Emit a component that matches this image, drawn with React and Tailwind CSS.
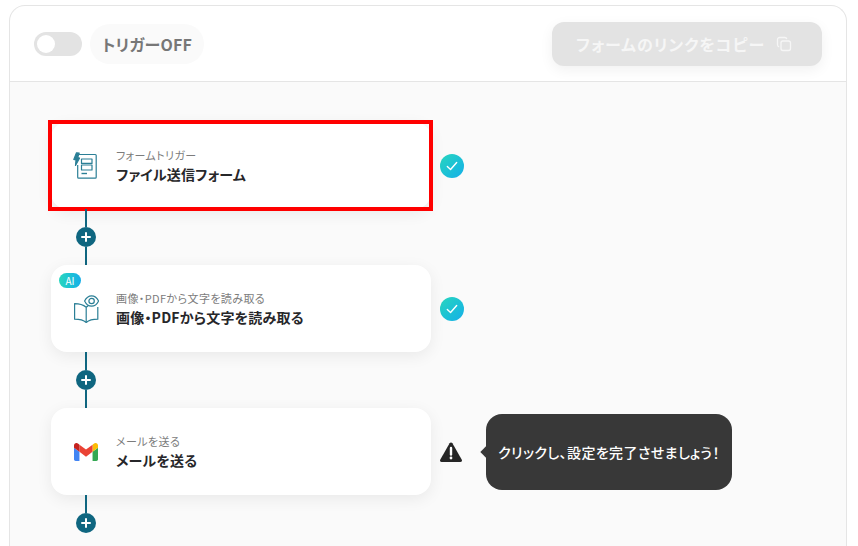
import React from 'react';

const Check = () => (
  <div className="ml-[9px] flex h-6 w-6 items-center justify-center rounded-full bg-gradient-to-br from-[#2ad6bd] to-[#18aee8]">
    <svg viewBox="0 0 24 24" className="h-[14px] w-[14px]" fill="none" stroke="#fff" strokeWidth="2.4" strokeLinecap="round" strokeLinejoin="round">
      <path d="M4 13l5.5 5L20 6" />
    </svg>
  </div>
);

const Connector = ({ last }) => (
  <div className="relative flex w-[70px] flex-col items-center">
    <div className="h-[18px] w-[2px] bg-[#0f6680]" />
    <div className="flex h-5 w-5 items-center justify-center rounded-full bg-[#0f6680]">
      <svg viewBox="0 0 12 12" className="h-3 w-3" fill="none" stroke="#fff" strokeWidth="2" strokeLinecap="round">
        <path d="M6 2v8M2 6h8" />
      </svg>
    </div>
    {!last && <div className="h-[18px] w-[2px] bg-[#0f6680]" />}
  </div>
);

const FormIcon = () => (
  <svg viewBox="0 0 24 27" className="mr-[2px] h-[27px] w-6" fill="none" stroke="#2b7f96" strokeWidth="1.2" strokeLinejoin="round">
    <path d="M5.5 2.500h16.800a.9.9 0 0 1 .9.9v21.900a.9.9 0 0 1-.9.9H5.600a.9.9 0 0 1-.9-.9V13" />
    <path d="M3.500.8L.8 7.400l2.200.5-.5 5.600 4-7.400-1.800-.6L6.200 1z" fill="#2b7f96" />
    <rect x="8.500" y="7" width="10.500" height="4.400" />
    <rect x="8.500" y="13" width="10.500" height="5" />
    <path d="M8.500 21.500h5.500" strokeWidth="1.4" />
  </svg>
);

const BookIcon = () => (
  <svg viewBox="0 0 25 28" className="h-7 w-[25px]" fill="none" stroke="#2b7f96" strokeWidth="1.2" strokeLinejoin="round">
    <path d="M12.200 12.200C9.500 10 4.600 8.600.6 8.600v15.600c4 0 8.900 1 11.600 3.300V12.200z" />
    <path d="M12.200 27.500c2.700-2.300 7.600-3.300 11.600-3.300V12M12.200 12.200c.6-.5 1.300-1 2-1.300" />
    <path d="M11 6c1.600-3.300 4.200-5.200 7-5.200S23.400 2.700 25 6c-1.600 3.300-4.200 5.200-7 5.200S12.600 9.300 11 6z" fill="#fff" transform="translate(-.4 0)" />
    <circle cx="17.600" cy="6" r="2.700" />
  </svg>
);

const GmailIcon = () => (
  <svg viewBox="52 42 88 66" className="h-[18px] w-6">
    <path fill="#4285f4" d="M58 108h14V74L52 59v43c0 3.32 2.69 6 6 6" />
    <path fill="#34a853" d="M120 108h14c3.32 0 6-2.69 6-6V59l-20 15" />
    <path fill="#fbbc04" d="M120 48v26l20-15v-8c0-7.42-8.47-11.65-14.4-7.2" />
    <path fill="#ea4335" d="M72 74V48l24 18 24-18v26L96 92" />
    <path fill="#c5221f" d="M52 51v8l20 15V48l-5.6-4.2c-5.94-4.45-14.4-.22-14.4 7.2" />
  </svg>
);

const Card = ({ icon, sub, title, children }) => (
  <div className="relative flex h-[87px] w-[380px] items-center rounded-2xl bg-white shadow-[0_4px_16px_rgba(0,0,0,0.07)]">
    <div className="flex w-[65px] justify-center pl-[5px]">{icon}</div>
    <div className="flex flex-col pb-[1px]">
      <span className="pb-[1px] text-[11px] leading-[16px] tracking-[0.4px] text-[#7c7c7c]">{sub}</span>
      <span className="text-sm leading-[20px] font-bold tracking-[0.2px] text-[#27272a]">{title}</span>
    </div>
    {children}
  </div>
);

export default function App() {
  return (
    <div className="h-[546px] w-[858px] overflow-hidden bg-white pt-[5px] pl-[9px] font-['Noto_Sans_CJK_JP','Noto_Sans',sans-serif] [font-feature-settings:'palt']">
      <div className="h-[541px] w-[838px] rounded-t-2xl border border-b-0 border-[#e5e5e5]">
        {/* Header */}
        <div className="flex h-[76px] items-center justify-between border-b border-[#e5e5e5] pr-[24px] pl-[24px]">
          <div className="flex items-center gap-2">
            <div className="flex h-6 w-12 items-center rounded-full bg-[#e3e3e3] pl-[3px]">
              <div className="h-[18px] w-[18px] rounded-full bg-white" />
            </div>
            <div className="flex h-10 w-[114px] items-center justify-center rounded-full bg-[#fafafa] text-base font-bold tracking-[0.2px] text-[#777777]">
              トリガーOFF
            </div>
          </div>
          <div className="flex h-11 w-[270px] items-center justify-center gap-[11px] rounded-xl bg-[#e3e3e3] pr-[6px] text-base font-bold tracking-[1px] text-[#f6f6f6] shadow-[0_4px_14px_rgba(0,0,0,0.06)]">
            フォームのリンクをコピー
            <svg viewBox="0 0 16 16" className="h-4 w-4" fill="none" stroke="#f6f6f6" strokeWidth="1.3">
              <rect x="5" y="5" width="9.500" height="9.500" rx="2" />
              <path d="M3.200 10.800C2.200 10.600 1.500 9.800 1.500 8.800V3.500a2 2 0 0 1 2-2h5.300c1 0 1.800.7 2 1.700" />
            </svg>
          </div>
        </div>

        {/* Flow */}
        <div className="h-[470px] bg-[#fafafa] pt-[40px] pl-[41px]">
          <div className="flex items-center">
            <Card icon={<FormIcon />} sub="フォームトリガー" title="ファイル送信フォーム">
              <div className="absolute -top-[2px] -right-[2px] -bottom-[2px] -left-[3px] border-4 border-[#ff0000]" />
            </Card>
            <Check />
          </div>
          <Connector />
          <div className="flex items-center">
            <Card icon={<BookIcon />} sub="画像・PDFから文字を読み取る" title="画像・PDFから文字を読み取る">
              <span className="absolute top-2 left-2 flex h-[15px] w-[22px] items-center justify-center rounded-full bg-gradient-to-r from-[#2ad6bd] to-[#18aee8] text-[10px] leading-none text-white">
                AI
              </span>
            </Card>
            <Check />
          </div>
          <Connector />
          <div className="flex items-center">
            <Card icon={<GmailIcon />} sub="メールを送る" title="メールを送る" />
            <svg viewBox="0 0 24 22" className="ml-2 h-[22px] w-6">
              <path d="M12 1.500c.6 0 1.100.3 1.400.8l9.400 16.400c.6 1.100-.1 2.300-1.400 2.300H2.600c-1.300 0-2-1.200-1.400-2.300L10.600 2.300c.3-.5.8-.8 1.400-.8z" fill="#262626" />
              <path d="M12 7v6.500" stroke="#fff" strokeWidth="2.400" strokeLinecap="round" />
              <circle cx="12" cy="17" r="1.400" fill="#fff" />
            </svg>
            <div className="relative ml-[23px] flex h-[76px] w-[246px] items-center justify-center rounded-2xl bg-[#383838] text-sm font-medium tracking-[0.4px] text-white">
              <div className="absolute top-[34px] -left-[4px] h-2 w-2 rotate-45 bg-[#383838]" />
              クリックし、設定を完了させましょう！
            </div>
          </div>
          <Connector last />
        </div>
      </div>
    </div>
  );
}
